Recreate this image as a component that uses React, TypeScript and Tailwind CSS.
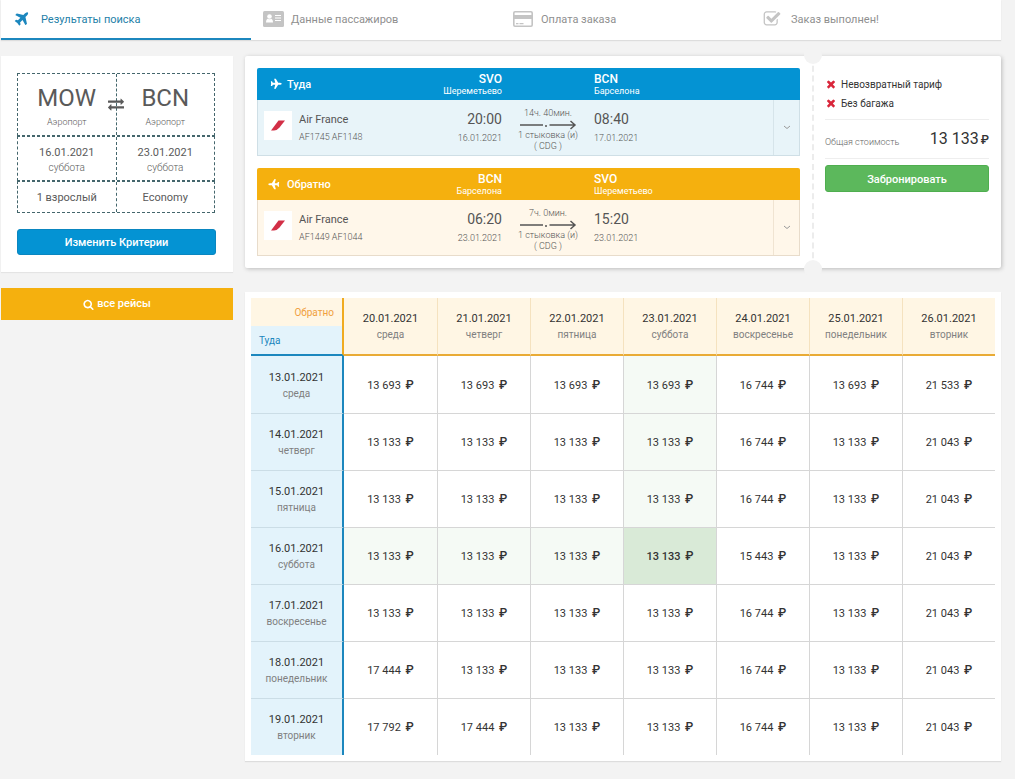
import type { ReactNode } from "react";

const ICONS = {
  plane:
    "M1568 160q44 52 12 148t-108 172l-161 161 160 696q5 19-12 33l-128 96q-7 6-19 6-4 0-7-1-15-3-21-16l-279-508-259 259 53 194q5 17-8 31l-96 96q-9 9-23 9h-2q-15-2-24-13l-189-252-252-189q-11-7-13-23-1-13 9-25l96-97q9-9 23-9 6 0 8 1l194 53 259-259-508-279q-14-8-17-24-2-16 9-27l128-128q14-13 30-8l665 159 160-160q76-76 172-108t148 12z",
  search:
    "M1216 832q0-185-131.5-316.5t-316.5-131.5-316.5 131.5-131.5 316.5 131.5 316.5 316.5 131.5 316.5-131.5 131.5-316.5zm512 832q0 52-38 90t-90 38q-54 0-90-38l-343-342q-179 124-399 124-143 0-273.5-55.5t-225-150-150-225-55.5-273.5 55.5-273.5 150-225 225-150 273.5-55.5 273.5 55.5 225 150 150 225 55.5 273.5q0 220-124 399l343 343q37 37 37 90z",
  times:
    "M1490 1322q0 40-28 68l-136 136q-28 28-68 28t-68-28l-294-294-294 294q-28 28-68 28t-68-28l-136-136q-28-28-28-68t28-68l294-294-294-294q-28-28-28-68t28-68l136-136q28-28 68-28t68 28l294 294 294-294q28-28 68-28t68 28l136 136q28 28 28 68t-28 68l-294 294 294 294q28 28 28 68z",
  exchange:
    "M1792 1184v192q0 13-9.5 22.5t-22.5 9.5h-1376v192q0 13-9.5 22.5t-22.5 9.5q-12 0-24-10l-319-320q-9-9-9-22 0-14 9-23l320-320q9-9 23-9 13 0 22.5 9.5t9.5 22.5v192h1376q13 0 22.5 9.5t9.5 22.5zm0-544q0 14-9 23l-320 320q-9 9-23 9-13 0-22.5-9.5t-9.5-22.5v-192h-1376q-13 0-22.5-9.5t-9.5-22.5v-192q0-13 9.5-22.5t22.5-9.5h1376v-192q0-14 9-23t23-9q12 0 24 10l319 319q9 9 9 23z",
  check:
    "M1472 930v318q0 119-84.5 203.5t-203.5 84.5h-832q-119 0-203.5-84.5t-84.5-203.5v-832q0-119 84.5-203.5t203.5-84.5h832q63 0 117 25 15 7 18 23 3 17-9 29l-49 49q-10 10-23 10-3 0-9-2-23-6-45-6h-832q-66 0-113 47t-47 113v832q0 66 47 113t113 47h832q66 0 113-47t47-113v-254q0-13 9-22l64-64q10-10 23-10 6 0 12 3 20 8 20 29zm231-489l-814 814q-24 24-57 24t-57-24l-430-430q-24-24-24-57t24-57l110-110q24-24 57-24t57 24l263 263 647-647q24-24 57-24t57 24l110 110q24 24 24 57t-24 57z",
};

function Icon({ name, className }: { name: keyof typeof ICONS; className: string }) {
  return (
    <svg viewBox="0 0 1792 1792" fill="currentColor" aria-hidden="true" className={className}>
      <path d={ICONS[name]} />
    </svg>
  );
}

function IdCard() {
  return (
    <svg viewBox="0 0 21 16" className="h-4 w-[21px]" aria-hidden="true">
      <rect width="21" height="16" rx="1.5" fill="currentColor" />
      <g fill="#fff">
        <circle cx="6.5" cy="5.5" r="2.3" />
        <path d="M3 11.5c0-2.500 1-3.700 2-3.700q1.500 1 3 0c1 0 2 1.200 2 3.700z" />
        <path d="M12 4h6v1h-6zM12 6.500h6v1h-6zM12 9h6v1h-6z" />
      </g>
    </svg>
  );
}

function CreditCard() {
  return (
    <svg viewBox="0 0 20 16" className="h-4 w-5" aria-hidden="true">
      <rect x="0.8" y="0.8" width="18.400" height="14.400" rx="1.200" fill="none" stroke="currentColor" strokeWidth="1.600" />
      <path d="M1 4h18v4H1zM3 12h2.500v1.200H3zM6.500 12h4v1.200h-4z" fill="currentColor" />
    </svg>
  );
}

const STEPS: { label: string; icon: ReactNode }[] = [
  { label: "Результаты поиска", icon: <Icon name="plane" className="h-[17px] w-[17px]" /> },
  { label: "Данные пассажиров", icon: <IdCard /> },
  { label: "Оплата заказа", icon: <CreditCard /> },
  { label: "Заказ выполнен!", icon: <Icon name="check" className="h-[18px] w-[18px]" /> },
];

function Steps() {
  return (
    <nav className="grid grid-cols-4 bg-white shadow-[0_1px_1px_#ddd]">
      {STEPS.map((s, i) => (
        <a
          key={s.label}
          href="#"
          className={
            i === 0
              ? "flex h-10 items-center border-b-2 border-[#1c87be] pl-3 text-[11px] text-[#2480a8]"
              : "flex h-10 items-center border-b-2 border-transparent pl-3 text-[11px] text-[#8f8f8f]"
          }
        >
          <span className={i === 0 ? "w-7 text-[#1c87be]" : "w-7 text-[#c4c4c4]"}>{s.icon}</span>
          <span className="pt-[3px]">{s.label}</span>
        </a>
      ))}
    </nav>
  );
}

function Place({ code }: { code: string }) {
  return (
    <div className="flex flex-1 flex-col items-center pt-2.5">
      <span className="text-2xl leading-7">{code}</span>
      <span className="text-[9px] leading-5 font-light">Аэропорт</span>
    </div>
  );
}

function DateCell({ date, day }: { date: string; day: string }) {
  return (
    <div className="flex flex-1 flex-col items-center justify-center pt-0.5">
      <span className="text-[11px] leading-4">{date}</span>
      <span className="text-[10px] leading-3.5 font-light">{day}</span>
    </div>
  );
}

function Sidebar() {
  return (
    <aside className="w-[232px] shrink-0">
      <section className="bg-white p-4 py-[17px] pr-[17px] shadow-[0_1px_1px_#e4e4e4]">
        <div className="mr-px text-[#5a5a5a]">
          <div className="relative">
            <div className="flex h-[63px] divide-x divide-dashed divide-[#44666c] border border-dashed border-[#44666c]">
              <Place code="MOW" />
              <Place code="BCN" />
            </div>
            <Icon name="exchange" className="absolute top-[23px] left-1/2 h-4 w-4 -translate-x-1/2" />
          </div>
          <div className="flex h-[45px] divide-x divide-dashed divide-[#44666c] border border-dashed border-[#44666c]">
            <DateCell date="16.01.2021" day="суббота" />
            <DateCell date="23.01.2021" day="суббота" />
          </div>
          <div className="flex h-8 divide-x divide-dashed divide-[#44666c] border border-dashed border-[#44666c] text-center text-[11px] leading-8">
            <span className="flex-1">1 взрослый</span>
            <span className="flex-1">Economy</span>
          </div>
        </div>
        <button className="mt-4 h-[26px] w-full rounded-[3px] border border-[#0a86c0] bg-[#0493d3] text-[11px] leading-none font-medium text-white">
          Изменить Критерии
        </button>
      </section>
      <button className="mt-4 flex h-8 w-full items-center justify-center gap-[3px] bg-[#f5b00e] pt-px text-[11px] font-medium text-white">
        <Icon name="search" className="h-[11px] w-[11px]" />
        все рейсы
      </button>
    </aside>
  );
}

type Stop = { code: string; city: string; time: string; date: string };
type Leg = { back: boolean; title: string; flights: string; from: Stop; to: Stop; duration: string };

const LEGS: Leg[] = [
  {
    back: false,
    title: "Туда",
    flights: "AF1745 AF1148",
    from: { code: "SVO", city: "Шереметьево", time: "20:00", date: "16.01.2021" },
    to: { code: "BCN", city: "Барселона", time: "08:40", date: "17.01.2021" },
    duration: "14ч. 40мин.",
  },
  {
    back: true,
    title: "Обратно",
    flights: "AF1449 AF1044",
    from: { code: "BCN", city: "Барселона", time: "06:20", date: "23.01.2021" },
    to: { code: "SVO", city: "Шереметьево", time: "15:20", date: "23.01.2021" },
    duration: "7ч. 0мин.",
  },
];

function StopHead({ stop, right }: { stop: Stop; right?: boolean }) {
  return (
    <div className={right ? "pt-0.5 text-right" : "pt-0.5"}>
      <div className="text-xs leading-3 font-medium">{stop.code}</div>
      <div className="text-[9px] leading-3">{stop.city}</div>
    </div>
  );
}

function StopTime({ stop, right }: { stop: Stop; right?: boolean }) {
  return (
    <div className={right ? "pt-2.5 text-right" : "pt-2.5"}>
      <div className="text-sm leading-[18px]">{stop.time}</div>
      <div className="text-[9px] leading-5 font-light">{stop.date}</div>
    </div>
  );
}

function LegPanel({ leg }: { leg: Leg }) {
  return (
    <article>
      <header
        className={
          leg.back
            ? "grid h-8 grid-cols-[245fr_92px_179fr_27px] items-center rounded-t-[2px] bg-[#f5b00e] text-white"
            : "grid h-8 grid-cols-[245fr_92px_179fr_27px] items-center rounded-t-[2px] bg-[#0493d3] text-white"
        }
      >
        <div className="flex items-center justify-between pl-3">
          <h2 className="flex items-center gap-1.5 text-[11px] font-medium">
            <Icon name="plane" className={leg.back ? "h-3 w-3 -rotate-135" : "h-3 w-3 rotate-45"} />
            <span className="pt-0.5">{leg.title}</span>
          </h2>
          <StopHead stop={leg.from} right />
        </div>
        <span />
        <StopHead stop={leg.to} />
      </header>
      <div
        className={
          leg.back
            ? "grid h-14 grid-cols-[244fr_92px_179fr_26px] border border-t-0 border-[#e8dccb] bg-[#fff7ea] text-[#555]"
            : "grid h-14 grid-cols-[244fr_92px_179fr_26px] border border-t-0 border-[#cfdfe6] bg-[#e8f4f9] text-[#555]"
        }
      >
        <div className="flex justify-between pl-1.5">
          <div className="flex gap-[7px]">
            <span className="mt-[11px] flex h-[29px] w-7 items-center justify-center bg-white">
              <svg viewBox="0 0 14 11" className="h-[11px] w-3.5" aria-hidden="true">
                <path d="M7.500 0.500H14L8.500 7.500Q6 10.500 3 10.500H0z" fill="#d22f46" />
              </svg>
            </span>
            <div className="pt-2.5">
              <div className="text-[11px] leading-5">Air France</div>
              <div className="text-[9px] leading-3.5 font-light">{leg.flights}</div>
            </div>
          </div>
          <StopTime stop={leg.from} right />
        </div>
        <div className="flex flex-col items-center pt-2 text-center text-[9px] leading-[11px] font-light whitespace-nowrap">
          <span className="leading-[11px]">{leg.duration}</span>
          <svg viewBox="0 0 58 11" className="h-[11px] w-[58px]" fill="none" stroke="#555" strokeWidth="1.500" aria-hidden="true">
            <path d="M1 6h23M30.500 6H56M51.500 2l4.500 4-4.500 4M26 7h2" />
          </svg>
          <span className="leading-[11px]">1 стыковка (и)</span>
          <span>( CDG )</span>
        </div>
        <StopTime stop={leg.to} />
        <button
          aria-label="Подробнее"
          className={
            leg.back
              ? "flex items-center justify-center border-l border-[#f0e4d2] text-[#999]"
              : "flex items-center justify-center border-l border-[#d6e4ea] text-[#999]"
          }
        >
          <svg viewBox="0 0 8 5" className="h-[5px] w-2" fill="none" stroke="currentColor" aria-hidden="true">
            <path d="M1 1l3 2.500L7 1" />
          </svg>
        </button>
      </div>
    </article>
  );
}

function Ticket() {
  return (
    <section className="flex rounded-[2px] bg-white shadow-[1px_1px_4px_#bbb]">
      <div className="flex flex-1 flex-col gap-3 p-3 pr-0">
        {LEGS.map((leg) => (
          <LegPanel key={leg.title} leg={leg} />
        ))}
      </div>
      <div className="relative ml-3 w-px">
        <div className="h-full border-l-2 border-dashed border-[#ececec]" />
        <span className="absolute -top-2.5 -left-2 h-[18px] w-[18px] rounded-full bg-[#f3f3f3]" />
        <span className="absolute -bottom-2.5 -left-2 h-[18px] w-[18px] rounded-full bg-[#f3f3f3]" />
      </div>
      <div className="w-[188px] px-3 pt-[19px] text-[#333]">
        <ul className="border-b border-[#eee] pb-1.5 text-[10px] leading-[19px]">
          {["Невозвратный тариф", "Без багажа"].map((t) => (
            <li key={t} className="flex items-center gap-1">
              <Icon name="times" className="mb-0.5 h-3 w-3 text-[#d9263a]" />
              {t}
            </li>
          ))}
        </ul>
        <div className="flex h-[39px] items-center justify-between border-b border-[#eee]">
          <span className="pt-2 text-[9px] font-light text-[#666]">Общая стоимость</span>
          <span className="text-base">
            13 133 <span className="-ml-0.5 text-xs font-medium">₽</span>
          </span>
        </div>
        <button className="mt-1.5 h-[27px] w-full rounded-[3px] border border-[#4fae4f] bg-[#5cb85c] pt-0.5 text-[11px] leading-none font-medium text-white">
          Забронировать
        </button>
      </div>
    </section>
  );
}

const DAYS = ["среда", "четверг", "пятница", "суббота", "воскресенье", "понедельник", "вторник"];
const A = "13 133";
const PRICES = [
  ["13 693", "13 693", "13 693", "13 693", "16 744", "13 693", "21 533"],
  [A, A, A, A, "16 744", A, "21 043"],
  [A, A, A, A, "16 744", A, "21 043"],
  [A, A, A, A, "15 443", A, "21 043"],
  [A, A, A, A, "16 744", A, "21 043"],
  ["17 444", A, A, A, "16 744", A, "21 043"],
  ["17 792", "17 444", A, A, "16 744", A, "21 043"],
];

function cellTone(r: number, c: number) {
  if (r === 3 && c === 3) return "bg-[#d9ead7] font-medium";
  if ((r === 3 && c < 3) || (c === 3 && r < 3)) return "bg-[#f5faf5]";
  return "";
}

function DayLabel({ date, day }: { date: string; day: string }) {
  return (
    <>
      <div className="text-[11px] leading-[17px] text-[#333]">{date}</div>
      <div className="text-[10px] leading-4 text-[#808080]">{day}</div>
    </>
  );
}

function PriceMatrix() {
  return (
    <section className="mt-6 bg-white p-1.5 shadow-[0_1px_1px_#ddd]">
      <table className="w-full table-fixed border-separate border-spacing-0 text-center text-[11px] text-[#333]">
        <thead>
          <tr className="h-[58px]">
            <th className="border-r-2 border-b-2 border-r-[#f0ab20] border-b-[#1c87be] p-0 text-[10px] font-normal">
              <div className="h-7 bg-[#fff6e4] pr-2 text-right leading-[30px] text-[#f0a040]">Обратно</div>
              <div className="h-7 bg-[#e3f3fb] pl-2 text-left leading-[30px] text-[#1c87be]">Туда</div>
            </th>
            {DAYS.map((day, i) => (
              <th
                key={day}
                className={
                  i === 0
                    ? "border-b-2 border-[#e9ab35] bg-[#fff6e4] p-0 pt-px font-normal"
                    : "border-b-2 border-l border-b-[#e9ab35] border-l-[#f5e2bf] bg-[#fff6e4] p-0 pt-px font-normal"
                }
              >
                <DayLabel date={`${20 + i}.01.2021`} day={day} />
              </th>
            ))}
          </tr>
        </thead>
        <tbody>
          {PRICES.map((row, r) => (
            <tr key={DAYS[r]} className="h-[57px]">
              <th
                className={
                  r === 0
                    ? "border-r-2 border-r-[#1c87be] bg-[#e3f3fb] p-0 pt-px font-normal"
                    : "border-t border-r-2 border-t-[#cbdde6] border-r-[#1c87be] bg-[#e3f3fb] p-0 pt-px font-normal"
                }
              >
                <DayLabel date={`${13 + r}.01.2021`} day={DAYS[r]} />
              </th>
              {row.map((price, c) => (
                <td
                  key={c}
                  className={`${r > 0 ? "border-t pt-px" : "pt-0.5"} ${c > 0 ? "border-l" : ""} border-[#d6d6d6] px-0 pb-0 ${cellTone(r, c)}`}
                >
                  {price} <span className="ml-0.5 text-xs font-medium">₽</span>
                </td>
              ))}
            </tr>
          ))}
        </tbody>
      </table>
    </section>
  );
}

export default function App() {
  return (
    <div className="min-h-screen bg-[#f3f3f3] pr-3.5 pb-[18px] pl-px font-[Roboto,sans-serif]">
      <Steps />
      <div className="mt-4 flex items-start gap-3">
        <Sidebar />
        <main className="min-w-0 flex-1">
          <Ticket />
          <PriceMatrix />
        </main>
      </div>
    </div>
  );
}
